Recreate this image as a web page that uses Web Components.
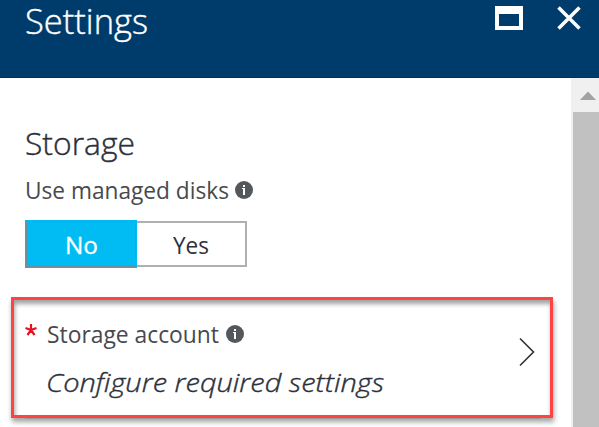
<!DOCTYPE html>
<html lang="en"><head><meta charset="utf-8"><title>Settings</title>
<style>html,body{margin:0;height:100%;overflow:hidden;background:#fff}</style></head>
<body><settings-blade></settings-blade>
<script>
const define = (name, html, ready) => customElements.define(name, class extends HTMLElement {
  connectedCallback() {
    if (this.shadowRoot) return;
    this.attachShadow({mode: 'open'}).innerHTML = html;
    if (ready) ready(this, this.shadowRoot);
  }
});

// A line of text condensed to the width given in its "width" attribute.
define('fit-text', `<style>
:host{display:block;flex:none;white-space:nowrap;font-family:"Open Sans","Noto Sans",sans-serif}
span{display:inline-block;transform-origin:0 50%}
</style><span></span>`, (el, root) => {
  const span = root.querySelector('span');
  span.textContent = el.getAttribute('text');
  const w = +el.getAttribute('width');
  el.style.width = w + 'px';
  span.style.transform = 'scaleX(' + w / span.getBoundingClientRect().width + ')';
});

define('info-icon', `<style>:host{display:block;width:18px;height:18px;flex:none}svg{display:block}</style>
<svg width="18" height="18"><circle cx="9" cy="9" r="9" fill="#54585d"/><path d="M8 4h2v2H8zM7 7h3v7H8V8H7z" fill="#fff"/></svg>`);

define('blade-header', `<style>
:host{display:flex;box-sizing:border-box;height:78px;background:#003c6b;border-bottom:1px solid #00335f;color:#fff;padding:0 18px 0 25px;justify-content:space-between}
fit-text{font-size:34.5px;line-height:41px;font-weight:300;-webkit-text-stroke:.4px #fff}
.tools{display:flex;gap:34px;padding-top:6px}
svg{display:block}
</style><fit-text text="Settings" width="123"></fit-text>
<div class="tools">
<svg width="28" height="24"><path d="M0 0h28v24H0zM4 8v12h20V8z" fill="#fff" fill-rule="evenodd"/></svg>
<svg width="24" height="24"><path d="M1.5 1.5l21 21M22.5 1.5l-21 21" stroke="#fff" stroke-width="3.5"/></svg>
</div>`);

define('toggle-switch', `<style>
:host{display:flex;align-items:center;height:48px;width:222px;font-size:23px;line-height:32px;color:#2b303b}
.on,.off{box-sizing:border-box;display:flex;align-items:center;justify-content:center;padding-top:2px}
.on{width:112px;height:48px;background:#00bcf2;border:1px solid #00bcf2;box-shadow:inset 0 0 0 1px #708c99;color:#fff}
.off{width:110px;height:46px;border:2px solid #b0b0b0;border-left:0}
.on fit-text{-webkit-text-stroke:.3px #fff}
</style><div class="on"><fit-text text="No" width="33"></fit-text></div><div class="off"><fit-text text="Yes" width="36"></fit-text></div>`);

define('setting-row', `<style>
:host{display:flex;box-sizing:border-box;width:542px;height:121px;border:3px solid #ff4343;box-shadow:1px 4px 5px rgba(0,0,0,.36),inset 1px 4px 4px rgba(0,0,0,.36);padding:0 15px 0 11px;align-items:flex-start}
.star{width:22px;padding-top:24px}
.star svg,.arrow{display:block}
.main{flex:1;padding-top:17px}
.label{display:flex;align-items:center;gap:7px;font-size:23.5px;line-height:34px;color:#47494d}
.value{font-size:26.5px;line-height:40px;font-style:italic;font-weight:300;-webkit-text-stroke:.4px #2b303b;color:#2b303b;margin:11px 0 0 -1px}
.arrow{margin-top:37px}
</style><div class="star"><svg width="12" height="12"><path d="M6 6V0M6 6L.5 4M6 6l5.5-2M6 6L2.5 11M6 6l3.5 5" stroke="#e81123" stroke-width="2.2"/></svg></div>
<div class="main"><div class="label"><fit-text text="Storage account" width="172"></fit-text><info-icon></info-icon></div>
<fit-text class="value" text="Configure required settings" width="338"></fit-text></div>
<svg class="arrow" width="16" height="30"><path d="M1 1.5L14.5 15 1 28.5" fill="none" stroke="#2b303b" stroke-width="1.6"/></svg>`);

define('scroll-bar', `<style>
:host{display:block;box-sizing:border-box;width:28px;background:#f0f0f0;padding-left:2px}
svg{display:block;height:34px}
.thumb{height:315px;background:#c1c1c1}
</style><svg width="26" height="34"><path d="M7 22h16l-8-8.5z" fill="#a3a3a3"/></svg><div class="thumb"></div>`);

define('settings-blade', `<style>
:host{display:block;width:599px;height:427px;overflow:hidden;background:#fff}
.body{display:flex;height:349px}
main{flex:1;padding:0 0 0 25px}
.heading{font-size:31.5px;line-height:44px;font-weight:300;color:#2b303b;-webkit-text-stroke:.4px #2b303b;margin-top:43px}
.label{display:flex;align-items:center;gap:6px;font-size:23.5px;line-height:34px;color:#47494d;margin-top:8px}
toggle-switch{margin-top:13px}
setting-row{margin:29px 0 0 -14px}
.rule{height:1px;width:516px;background:#999;position:relative}
</style><blade-header></blade-header>
<div class="body"><main>
<fit-text class="heading" text="Storage" width="110"></fit-text>
<div class="label"><fit-text text="Use managed disks" width="204"></fit-text><info-icon></info-icon></div>
<toggle-switch></toggle-switch><setting-row></setting-row><div class="rule"></div>
</main><scroll-bar></scroll-bar></div>`);
</script></body></html>
